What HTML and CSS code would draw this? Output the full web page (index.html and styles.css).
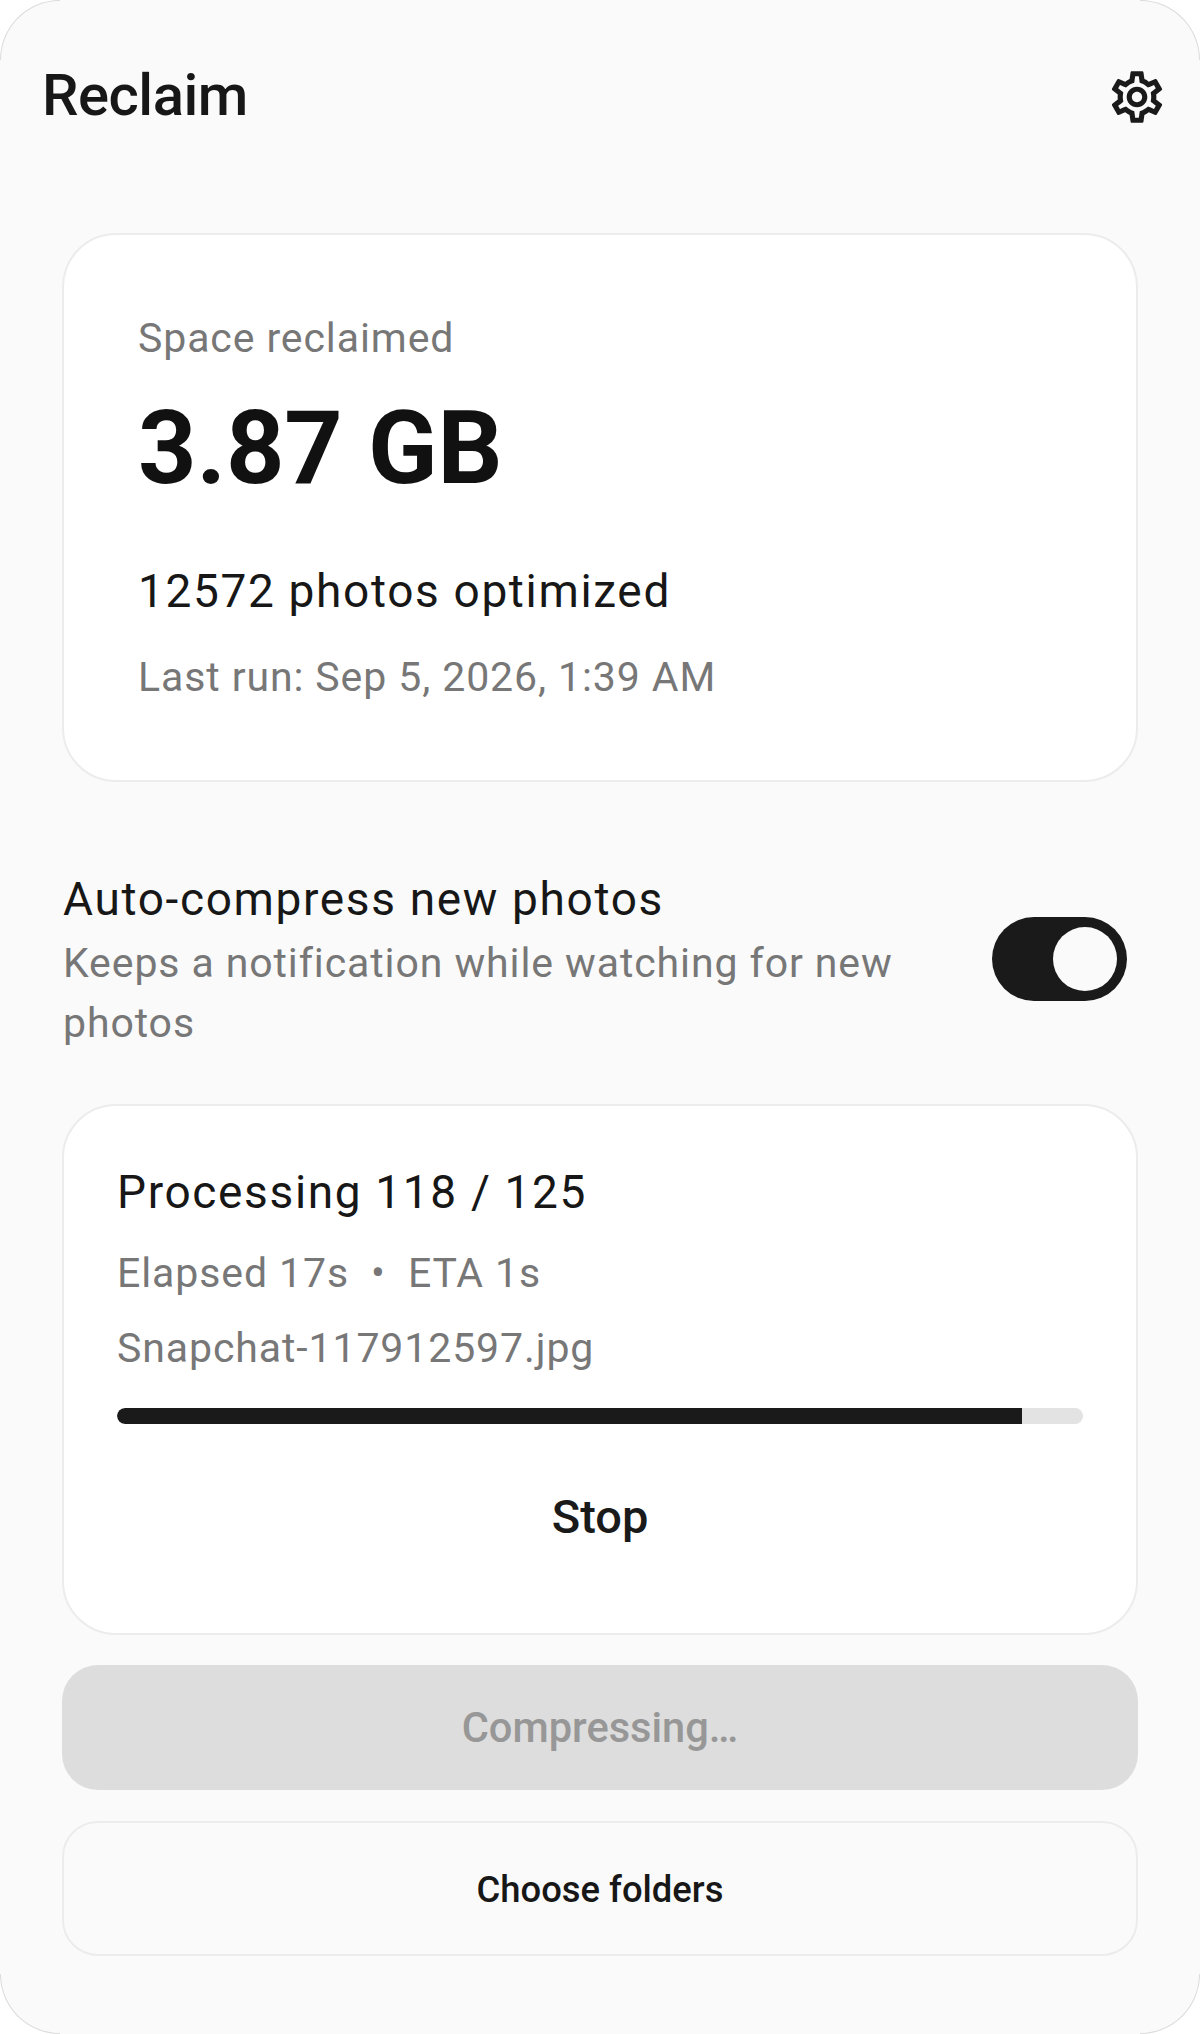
FILE: index.html
```html
<!DOCTYPE html>
<html lang="en">
<head>
<meta charset="utf-8">
<title>Reclaim</title>
<link rel="stylesheet" href="styles.css">
</head>
<body>
<main class="app">
  <span class="corner tl"></span><span class="corner tr"></span><span class="corner bl"></span><span class="corner br"></span>
  <header class="topbar">
    <h1 class="title">Reclaim</h1>
    <svg class="gear" viewBox="0 0 24 24" aria-hidden="true"><path d="M19.43 12.98c.04-.32.07-.64.07-.98 0-.34-.03-.66-.07-.98l2.11-1.65c.19-.15.24-.42.12-.64l-2-3.46c-.09-.16-.26-.25-.44-.25-.06 0-.12.01-.17.03l-2.49 1c-.52-.4-1.08-.73-1.69-.98l-.38-2.65C14.46 2.18 14.25 2 14 2h-4c-.25 0-.46.18-.49.42l-.38 2.65c-.61.25-1.17.59-1.69.98l-2.49-1c-.06-.02-.12-.03-.18-.03-.17 0-.34.09-.43.25l-2 3.46c-.13.22-.07.49.12.64l2.11 1.65c-.04.32-.07.65-.07.98 0 .33.03.66.07.98l-2.11 1.65c-.19.15-.24.42-.12.64l2 3.46c.09.16.26.25.44.25.06 0 .12-.01.17-.03l2.49-1c.52.4 1.08.73 1.69.98l.38 2.65c.03.24.24.42.49.42h4c.25 0 .46-.18.49-.42l.38-2.65c.61-.25 1.17-.59 1.69-.98l2.49 1c.06.02.12.03.18.03.17 0 .34-.09.43-.25l2-3.46c.12-.22.07-.49-.12-.64l-2.11-1.65zm-1.98-1.71c.04.31.05.52.05.73 0 .21-.02.43-.05.73l-.14 1.13.89.7 1.08.84-.7 1.21-1.27-.51-1.04-.42-.9.68c-.43.32-.84.56-1.25.73l-1.06.43-.16 1.13-.2 1.35h-1.4l-.19-1.35-.16-1.13-1.06-.43c-.43-.18-.83-.41-1.23-.71l-.91-.7-1.06.43-1.27.51-.7-1.21 1.08-.84.89-.7-.14-1.13c-.03-.31-.05-.54-.05-.74s.02-.43.05-.73l.14-1.13-.89-.7-1.08-.84.7-1.21 1.27.51 1.04.42.9-.68c.43-.32.84-.56 1.25-.73l1.06-.43.16-1.13.2-1.35h1.39l.19 1.35.16 1.13 1.06.43c.43.18.83.41 1.23.71l.91.7 1.06-.43 1.27-.51.7 1.21-1.07.85-.89.7.14 1.13zM12 8c-2.21 0-4 1.79-4 4s1.79 4 4 4 4-1.79 4-4-1.79-4-4-4zm0 6c-1.1 0-2-.9-2-2s.9-2 2-2 2 .9 2 2-.9 2-2 2z"/></svg>
  </header>

  <section class="card summary">
    <p class="muted label">Space reclaimed</p>
    <p class="amount">3.87 GB</p>
    <p class="strong count">12572 photos optimized</p>
    <p class="muted lastrun">Last run: Sep 5, 2026, 1:39 AM</p>
  </section>

  <section class="setting">
    <div class="setting-text">
      <p class="strong setting-title">Auto-compress new photos</p>
      <p class="muted setting-sub">Keeps a notification while watching for new photos</p>
    </div>
    <div class="switch"><span class="knob"></span></div>
  </section>

  <section class="card progress">
    <p class="strong proc">Processing 118 / 125</p>
    <p class="muted elapsed">Elapsed 17s &nbsp;•&nbsp; ETA 1s</p>
    <p class="muted file">Snapchat-117912597.jpg</p>
    <div class="track"><div class="fill" style="width:93.65%"></div></div>
    <div class="stop">Stop</div>
  </section>

  <div class="btn btn-disabled">Compressing…</div>
  <div class="btn btn-outline">Choose folders</div>
</main>
</body>
</html>
```

FILE: styles.css
```css
* { box-sizing: border-box; }
html, body { margin: 0; padding: 0; background: #fff; }
p, h1 { margin: 0; }
body { font-family: Roboto, "Noto Sans", sans-serif; }

.app {
  position: relative;
  width: 1200px;
  height: 2034px;
  background: #fafafa;
  border-radius: 60px;
  padding: 0 62px;
  display: flex;
  flex-direction: column;
}

.corner { position: absolute; width: 60px; height: 60px; border: 0 solid #dcdcdc; }
.tl { top: 0; left: 0; border-top-width: 1px; border-left-width: 1px; border-top-left-radius: 60px; }
.tr { top: 0; right: 0; border-top-width: 1px; border-right-width: 1px; border-top-right-radius: 60px; }
.bl { bottom: 0; left: 0; border-bottom-width: 1px; border-left-width: 1px; border-bottom-left-radius: 60px; }
.br { bottom: 0; right: 0; border-bottom-width: 1px; border-right-width: 1px; border-bottom-right-radius: 60px; }

.topbar {
  height: 233px;
  margin: 0 -62px;
  padding: 60px 32px 0 42px;
  display: flex;
  align-items: flex-start;
  justify-content: space-between;
}
.title {
  font-size: 58px;
  line-height: 70px;
  font-weight: 550;
  color: #171717;
  letter-spacing: -0.5px;
}
.gear { width: 62px; height: 62px; margin-top: 6px; fill: #1a1a1a; }

.card {
  background: #fff;
  border: 2px solid #ececec;
  border-radius: 54px;
}

.muted { color: #777; letter-spacing: 0.9px; }
.strong { color: #171717; letter-spacing: 1.65px; }

.summary { height: 549px; padding: 78px 0 0 74px; }
.label { font-size: 41px; line-height: 50px; }
.amount { font-size: 102px; line-height: 118px; font-weight: 700; color: #111; margin-top: 26px; letter-spacing: -0.1px; }
.count { font-size: 46px; line-height: 60px; margin-top: 54px; }
.lastrun { font-size: 41px; line-height: 50px; margin-top: 31px; }

.setting {
  display: flex;
  align-items: flex-start;
  justify-content: space-between;
  margin-top: 89px;
  height: 176px;
  padding-left: 1px;
  padding-right: 11px;
}
.setting-text { width: 860px; }
.setting-title { font-size: 46px; line-height: 56px; }
.setting-sub { font-size: 41px; line-height: 60px; margin-top: 6px; }
.switch {
  width: 135px;
  height: 84px;
  margin-top: 46px;
  border-radius: 42px;
  background: #1a1a1a;
  display: flex;
  align-items: center;
  justify-content: flex-end;
  padding-right: 10px;
}
.knob { width: 64px; height: 64px; border-radius: 50%; background: #fafafa; }

.progress { margin-top: 57px; height: 531px; padding: 56px 53px 0; }
.proc { font-size: 46px; line-height: 60px; }
.elapsed { font-size: 41px; line-height: 50px; margin-top: 26px; }
.file { font-size: 41px; line-height: 50px; margin-top: 25px; }
.track { height: 16px; border-radius: 8px; background: #e3e3e3; margin-top: 35px; overflow: hidden; }
.fill { height: 100%; background: #1a1a1a; border-radius: 8px 0 0 8px; }
.stop { text-align: center; font-size: 47px; line-height: 60px; font-weight: 500; color: #1a1a1a; margin-top: 63px; }

.btn { display: flex; align-items: center; justify-content: center; font-weight: 500; flex: none; }
.btn-disabled {
  margin-top: 30px;
  height: 125px;
  border-radius: 36px;
  background: #dddddd;
  color: #979797;
  font-size: 41.6px;
  font-weight: 550;
}
.btn-outline {
  margin-top: 31px;
  height: 135px;
  border-radius: 36px;
  border: 2px solid #ececec;
  color: #171717;
  font-size: 36.4px;
  padding-top: 2px;
}
```
